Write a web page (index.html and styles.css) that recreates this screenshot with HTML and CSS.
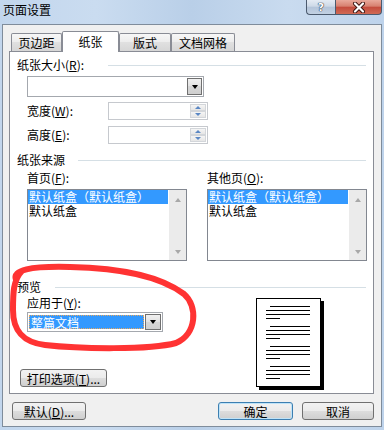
FILE: index.html
```html
<!DOCTYPE html>
<html lang="zh-CN">
<head>
    <meta charset="UTF-8">
    <meta name="viewport" content="width=device-width, initial-scale=1.0">
    <title>页面设置</title>
    <link rel="stylesheet" href="styles.css">
</head>
<body>
    <div class="window">
        <div class="titlebar">
            <span class="title">页面设置</span>
            <div class="caption-buttons">
                <div class="cap cap-help">?</div>
                <div class="cap cap-close">
                    <svg width="14" height="11" viewBox="0 0 14 11">
                        <path d="M3 1.5 L11 9.5 M11 1.5 L3 9.5" stroke="#3a1410" stroke-width="4" stroke-linecap="round"/>
                        <path d="M3 1.5 L11 9.5 M11 1.5 L3 9.5" stroke="#fff" stroke-width="2.2" stroke-linecap="round"/>
                    </svg>
                </div>
            </div>
        </div>

        <div class="client">
            <div class="tabs">
                <div class="tab tab-margins">页边距</div>
                <div class="tab active tab-paper">纸张</div>
                <div class="tab tab-layout">版式</div>
                <div class="tab tab-grid">文档网格</div>
            </div>

            <div class="panel">
                <!-- paper size -->
                <div class="group-head">
                    <span class="head-size">纸张大小(<u>R</u>):</span>
                    <i class="rule"></i>
                </div>
                <div class="combo combo-size">
                    <span class="combo-text"></span>
                    <span class="combo-btn"><i class="arrow-down"></i></span>
                </div>
                <div class="field field-width">
                    <label>宽度(<u>W</u>):</label>
                    <div class="spin">
                        <span class="spin-text"></span>
                        <span class="spin-btns">
                            <span class="spin-btn"><i class="tri-up"></i></span>
                            <span class="spin-btn"><i class="tri-down"></i></span>
                        </span>
                    </div>
                </div>
                <div class="field field-height">
                    <label>高度(<u>E</u>):</label>
                    <div class="spin">
                        <span class="spin-text"></span>
                        <span class="spin-btns">
                            <span class="spin-btn"><i class="tri-up"></i></span>
                            <span class="spin-btn"><i class="tri-down"></i></span>
                        </span>
                    </div>
                </div>

                <!-- paper source -->
                <div class="group-head head-source">
                    <span class="head-src">纸张来源</span>
                    <i class="rule"></i>
                </div>
                <div class="source-cols">
                    <div class="source-col">
                        <div class="col-label">首页(<u>F</u>):</div>
                        <div class="listbox">
                            <div class="items">
                                <div class="item selected">默认纸盒（默认纸盒）</div>
                                <div class="item">默认纸盒</div>
                            </div>
                            <div class="scrollbar">
                                <i class="sb-up"></i>
                                <i class="sb-down"></i>
                            </div>
                        </div>
                    </div>
                    <div class="source-col">
                        <div class="col-label">其他页(<u>O</u>):</div>
                        <div class="listbox">
                            <div class="items">
                                <div class="item selected">默认纸盒（默认纸盒）</div>
                                <div class="item">默认纸盒</div>
                            </div>
                            <div class="scrollbar">
                                <i class="sb-up"></i>
                                <i class="sb-down"></i>
                            </div>
                        </div>
                    </div>
                </div>

                <!-- preview -->
                <div class="group-head head-preview">
                    <span class="head-prev">预览</span>
                    <i class="rule"></i>
                </div>
                <div class="preview-body">
                    <div class="preview-left">
                        <div class="apply-label">应用于(<u>Y</u>):</div>
                        <div class="combo combo-apply">
                            <span class="combo-text"><span class="combo-sel">整篇文档</span></span>
                            <span class="combo-btn"><i class="arrow-down"></i></span>
                        </div>
                        <button class="btn btn-print">打印选项(<u>T</u>)...</button>
                    </div>
                    <div class="page">
                        <div class="para"><i class="ln first"></i><i class="ln"></i><i class="ln"></i><i class="ln short"></i></div>
                        <div class="para"><i class="ln first"></i><i class="ln"></i><i class="ln"></i><i class="ln short"></i></div>
                        <div class="para"><i class="ln first"></i><i class="ln"></i><i class="ln"></i><i class="ln short"></i></div>
                        <div class="para"><i class="ln first"></i><i class="ln"></i><i class="ln"></i><i class="ln short"></i></div>
                    </div>
                </div>
            </div>

            <div class="dialog-buttons">
                <button class="btn btn-default">默认(<u>D</u>)...</button>
                <button class="btn btn-ok">确定</button>
                <button class="btn btn-cancel">取消</button>
            </div>
        </div>

        <!-- red hand-drawn mark over the preview group -->
        <svg class="scribble" width="384" height="430" viewBox="0 0 384 430">
            <path d="M16 280 C12 270, 30 266, 70 267 C120 268, 160 276, 184 294 C198 306, 197 334, 176 343 C150 350, 80 349, 45 345 C22 342, 13 330, 13 310 C13 294, 13 280, 22 271"
                  fill="none" stroke="#ff3333" stroke-width="6" stroke-linecap="round" stroke-linejoin="round"/>
        </svg>
    </div>
</body>
</html>
```

FILE: styles.css
```css
* {
    box-sizing: border-box;
}
body {
    margin: 0;
    width: 384px;
    height: 430px;
    overflow: hidden;
    font-family: "Noto Sans CJK SC", "Noto Sans", sans-serif;
    font-size: 12px;
    color: #000;
}
u {
    text-decoration: underline;
}
.window {
    position: relative;
    width: 384px;
    height: 430px;
    background: linear-gradient(to right, #c2d6ed 0%, #cadcf0 25%, #b9cfe8 50%, #c9dbef 75%, #bed3eb 100%);
}
.titlebar {
    height: 24px;
    display: flex;
    justify-content: space-between;
    align-items: flex-start;
    padding: 0 2px 0 3px;
}
.title {
    margin-top: 3px;
    line-height: 14px;
    font-size: 12px;
}
.caption-buttons {
    display: flex;
}
.cap {
    height: 15px;
    border: 1px solid #4b5a6e;
    border-top: none;
    display: flex;
    justify-content: center;
    align-items: center;
}
.cap-help {
    width: 29px;
    border-right: none;
    border-radius: 0 0 0 4px;
    background: linear-gradient(#e4ebf4, #cdd9e7 45%, #b3c4d9 50%, #c2d1e3);
    color: #fff;
    font-family: "DejaVu Sans", sans-serif;
    font-weight: bold;
    font-size: 11px;
    line-height: 13px;
    text-shadow: 0 0 1px #2c3a4c, 0 0 1px #2c3a4c, 0 0 1px #2c3a4c;
}
.cap-close {
    width: 47px;
    border-radius: 0 0 4px 0;
    background: linear-gradient(#e9a99b, #d7806f 45%, #c44b3c 50%, #d06a55);
}
.client {
    margin: 0 2px;
    height: 403px;
    border: 1px solid #7f8c9b;
    background: #f0f0f0;
    display: flex;
    flex-direction: column;
}

/* tabs */
.tabs {
    position: relative;
    z-index: 1;
    display: flex;
    align-items: flex-end;
    height: 21px;
    margin: 6px 0 -1px 8px;
}
.tab {
    height: 18px;
    margin-bottom: 1px;
    border: 1px solid #898c95;
    border-bottom: none;
    border-radius: 2px 2px 0 0;
    background: linear-gradient(#f7f7f7, #ececec 50%, #e0e0e0 50%, #d6d6d6);
    text-align: center;
    line-height: 17px;
}
.tab.active {
    height: 21px;
    margin-bottom: 0;
    background: #fff;
    line-height: 19px;
}
.tab-margins { width: 51px; }
.tab-paper { width: 57px; }
.tab-layout { width: 52px; }
.tab-grid { width: 64px; }

.panel {
    margin-left: 6px;
    width: 365px;
    height: 343px;
    border: 1px solid #898c95;
    background: #fff;
    padding-left: 7px;
    display: flex;
    flex-direction: column;
}
.group-head {
    display: flex;
    align-items: center;
    height: 14px;
    line-height: 14px;
    margin-top: 6px;
}
.head-size { width: 91px; }
.head-src { width: 61px; }
.head-prev { width: 38px; }
.head-source { margin-top: 9px; }
.head-preview { margin-top: 19px; }
.rule {
    flex: 1;
    height: 1px;
    margin-right: 7px;
    background: #d5dfe5;
}

/* combo boxes */
.combo {
    display: flex;
    margin-left: 10px;
    padding: 1px;
    border: 1px solid #a4a8ae;
    background: #fff;
}
.combo-size {
    margin-top: 4px;
    width: 177px;
    height: 21px;
}
.combo-text {
    flex: 1;
    display: flex;
}
.combo-btn {
    width: 15px;
    border: 1px solid #707070;
    background: linear-gradient(#f0f0f0, #e2e2e2 50%, #d6d6d6 50%, #cfcfcf);
    display: flex;
    justify-content: center;
    align-items: center;
}
.arrow-down {
    width: 0;
    height: 0;
    border-left: 3.5px solid transparent;
    border-right: 3.5px solid transparent;
    border-top: 4px solid #000;
}

/* spin fields */
.field {
    display: flex;
    align-items: center;
    height: 18px;
    margin-left: 10px;
    margin-top: 5px;
}
.field-height { margin-top: 6px; }
.field label {
    width: 81px;
    line-height: 14px;
}
.spin {
    width: 100px;
    height: 18px;
    display: flex;
    padding: 1px;
    border: 1px solid #c6c9ce;
    background: #fff;
}
.spin-text { flex: 1; }
.spin-btns {
    width: 16px;
    display: flex;
    flex-direction: column;
}
.spin-btn {
    flex: 1;
    border: 1px solid #d3d6da;
    background: linear-gradient(#f5f5f5, #e6e6e6);
    display: flex;
    justify-content: center;
    align-items: center;
}
.tri-up,
.tri-down {
    width: 0;
    height: 0;
    border-left: 3px solid transparent;
    border-right: 3px solid transparent;
}
.tri-up { border-bottom: 3px solid #5b87c4; }
.tri-down { border-top: 3px solid #5b87c4; }

/* paper source lists */
.source-cols {
    display: flex;
    gap: 20px;
    margin-left: 10px;
    margin-top: 4px;
}
.source-col {
    width: 160px;
}
.col-label {
    height: 14px;
    line-height: 14px;
}
.listbox {
    margin-top: 4px;
    height: 72px;
    border: 1px solid #828790;
    background: #fff;
    display: flex;
}
.items {
    flex: 1;
    padding-right: 1px;
}
.item {
    height: 14px;
    line-height: 14px;
    padding-left: 1px;
    white-space: nowrap;
}
.item.selected {
    background: #3399ff;
    color: #fff;
}
.scrollbar {
    width: 17px;
    background: #ebebeb;
    display: flex;
    flex-direction: column;
    justify-content: space-between;
    align-items: center;
    padding: 8px 0 6px;
}
.sb-up,
.sb-down {
    width: 0;
    height: 0;
    border-left: 3.5px solid transparent;
    border-right: 3.5px solid transparent;
}
.sb-up { border-bottom: 4px solid #a8a8a8; }
.sb-down { border-top: 4px solid #a8a8a8; }

/* preview */
.preview-body {
    display: flex;
}
.preview-left {
    width: 239px;
    display: flex;
    flex-direction: column;
    align-items: flex-start;
}
.apply-label {
    margin: 2px 0 0 10px;
    height: 14px;
    line-height: 14px;
}
.combo-apply {
    margin-top: 2px;
    width: 136px;
    height: 20px;
}
.combo-apply .combo-text {
    padding: 1px 1px 1px 0;
}
.combo-sel {
    flex: 1;
    background: #3399ff;
    color: #fff;
    border: 1px dotted #e8a860;
    line-height: 14px;
    padding-left: 1px;
}
.combo-apply .combo-btn {
    width: 16px;
}
.page {
    margin-top: 4px;
    width: 65px;
    height: 89px;
    border: 1px solid #000;
    box-shadow: 3px 3px 0 #000;
    background: #fff;
    padding: 7px 0 0 9px;
    display: flex;
    flex-direction: column;
    gap: 7px;
}
.para {
    display: flex;
    flex-direction: column;
    gap: 3px;
}
.ln {
    display: block;
    width: 44px;
    height: 1px;
    background: #000;
}
.ln.first {
    width: 40px;
    margin-left: 4px;
}
.ln.short {
    width: 14px;
}

/* buttons */
.btn {
    height: 18px;
    padding: 0;
    border: 1px solid #707070;
    border-radius: 3px;
    background: linear-gradient(#f2f2f2, #ebebeb 50%, #dddddd 50%, #cfcfcf);
    font: inherit;
    color: #000;
    line-height: 15px;
    white-space: nowrap;
}
.btn-print {
    margin: 37px 0 0 3px;
    width: 87px;
}
.dialog-buttons {
    display: flex;
    margin-top: 8px;
    padding: 0 7px 0 9px;
}
.btn-default { width: 74px; }
.btn-ok {
    width: 75px;
    margin-left: auto;
    border-color: #3c7fb1;
    box-shadow: inset 0 0 0 1px #bfe3f8;
}
.btn-cancel {
    width: 72px;
    margin-left: 9px;
}

.scribble {
    position: absolute;
    top: 0;
    left: 0;
    pointer-events: none;
}
```
